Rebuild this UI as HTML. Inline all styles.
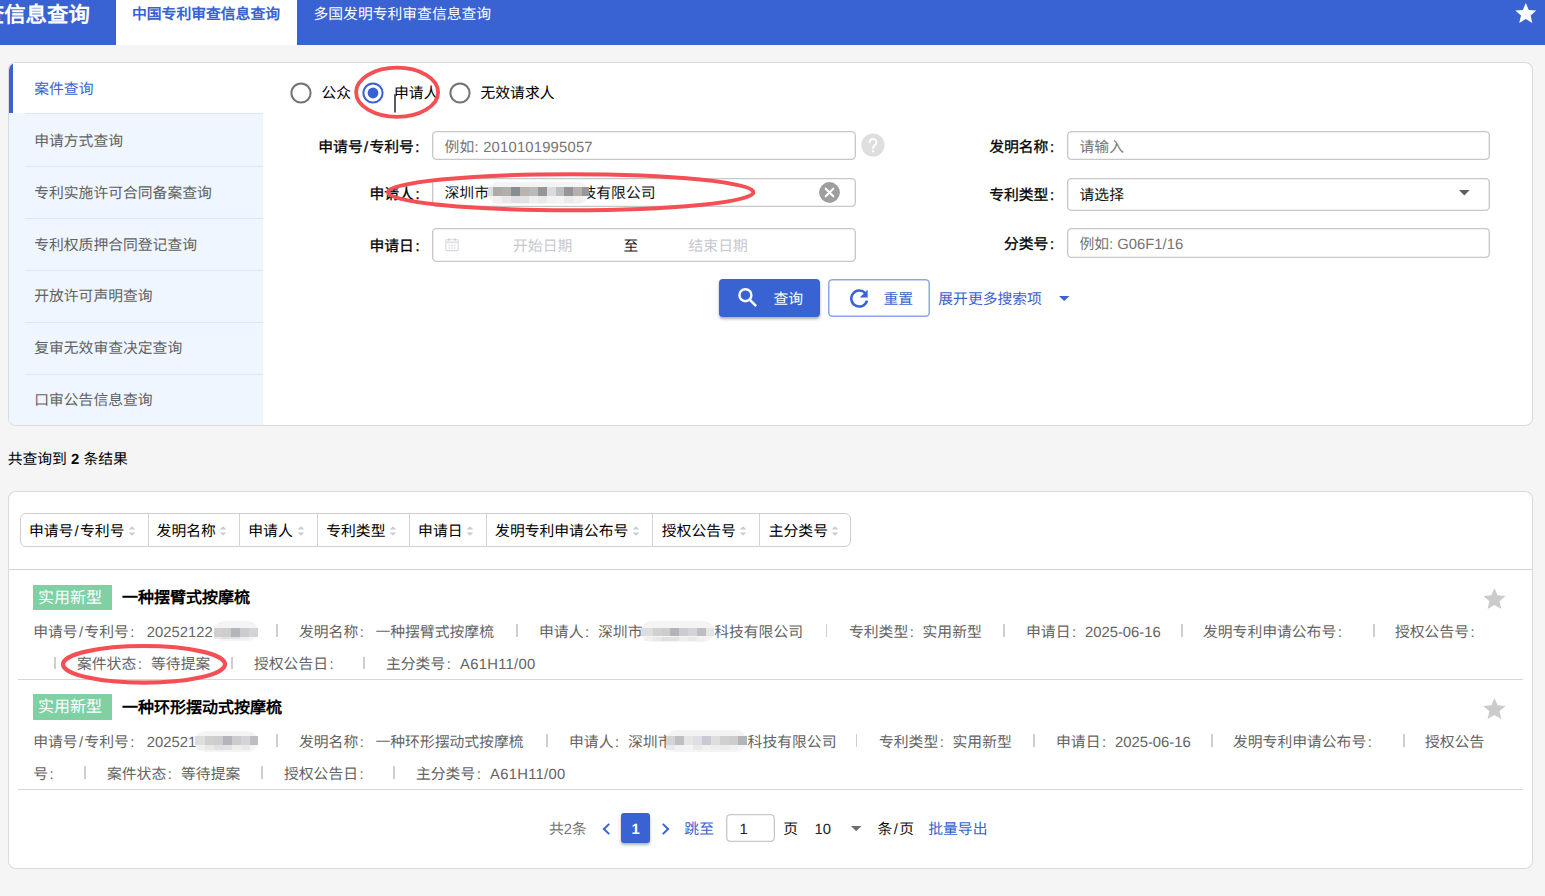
<!DOCTYPE html>
<html lang="zh-CN"><head><meta charset="utf-8"><title>中国专利审查信息查询</title><style>
html,body{margin:0;padding:0}
body{width:1545px;height:896px;overflow:hidden;background:#f5f5f5;position:relative;font-family:"Liberation Sans",sans-serif;font-size:14.8px;color:#000;text-rendering:geometricPrecision}
.b{position:absolute;display:block}
.t{position:absolute;white-space:nowrap;text-align:justify;text-align-last:justify;line-height:20px;height:20px}
.t i{font-style:normal;margin-left:1.5px}
.t em{font-style:normal;margin:0 1.3px}
</style></head><body>
<div class="b" style="left:0.00px;top:0.00px;width:1545.00px;height:44.50px;background:#3963d2;"></div>
<div class="b" style="left:116.00px;top:0.00px;width:181.20px;height:44.50px;background:#fff;"></div>
<span class="t " style="width:107.02px;top:0.50px;left:-17.20px;font-size:21.4px;color:#fff;font-weight:bold;line-height:28px;height:28px;">查信息查询</span>
<span class="t " style="width:148.03px;top:4.70px;left:132.00px;color:#3963d2;font-weight:bold;">中国专利审查信息查询</span>
<span class="t " style="width:177.63px;top:4.70px;left:313.50px;color:#fff;font-weight:500;">多国发明专利审查信息查询</span>
<svg class="b" style="left:1514px;top:2px" width="24" height="23" viewBox="0 0 24 23"><path fill="#fff" d="M11.8 0.9l2.95 7.0 7.6 0.65-5.75 5.0 1.72 7.4-6.52-3.93-6.52 3.93 1.72-7.4-5.75-5.0 7.6-0.65z"/></svg>
<div class="b" style="left:8.50px;top:62.50px;width:1523.80px;height:362.60px;background:#fff;border-radius:7px;box-shadow:0 0 0 1px #dadada;overflow:hidden;"></div>
<div class="b" style="left:8.5px;top:62.5px;width:254.60px;height:362.60px;border-radius:7px 0 0 7px;overflow:hidden;background:#eff6ff;">
<div class="b" style="left:0;top:0;width:254.60px;height:50.90px;background:#fff;border-left:4.2px solid #3963d2;box-sizing:border-box"></div>
<div class="b" style="left:16.5px;top:50.90px;width:238.10px;height:1px;background:#d9e7fb"></div>
<div class="b" style="left:16.5px;top:103.80px;width:238.10px;height:1px;background:#d9e7fb"></div>
<div class="b" style="left:16.5px;top:155.60px;width:238.10px;height:1px;background:#d9e7fb"></div>
<div class="b" style="left:16.5px;top:207.40px;width:238.10px;height:1px;background:#d9e7fb"></div>
<div class="b" style="left:16.5px;top:259.20px;width:238.10px;height:1px;background:#d9e7fb"></div>
<div class="b" style="left:16.5px;top:311.00px;width:238.10px;height:1px;background:#d9e7fb"></div>
</div>
<span class="t " style="width:59.25px;top:80.10px;left:34.20px;color:#3963d2;">案件查询</span>
<span class="t " style="width:88.85px;top:131.90px;left:34.20px;color:#616161;">申请方式查询</span>
<span class="t " style="width:177.63px;top:183.70px;left:34.20px;color:#616161;">专利实施许可合同备案查询</span>
<span class="t " style="width:162.83px;top:235.50px;left:34.20px;color:#616161;">专利权质押合同登记查询</span>
<span class="t " style="width:118.44px;top:287.30px;left:34.20px;color:#616161;">开放许可声明查询</span>
<span class="t " style="width:148.03px;top:339.10px;left:34.20px;color:#616161;">复审无效审查决定查询</span>
<span class="t " style="width:118.44px;top:390.90px;left:34.20px;color:#616161;">口审公告信息查询</span>
<svg class="b" style="left:289px;top:80.7px" width="24" height="24" viewBox="0 0 24 24"><circle cx="12" cy="12" r="9.6" fill="none" stroke="#737373" stroke-width="2"/></svg>
<span class="t " style="width:29.66px;top:84.10px;left:321.50px;">公众</span>
<svg class="b" style="left:361px;top:80.7px" width="24" height="24" viewBox="0 0 24 24"><circle cx="12" cy="12" r="9.6" fill="none" stroke="#3963d2" stroke-width="2"/><circle cx="12" cy="12" r="5.4" fill="#3963d2"/></svg>
<span class="t " style="width:44.46px;top:84.10px;left:394.00px;">申请人</span>
<svg class="b" style="left:448px;top:80.7px" width="24" height="24" viewBox="0 0 24 24"><circle cx="12" cy="12" r="9.6" fill="none" stroke="#737373" stroke-width="2"/></svg>
<span class="t " style="width:74.05px;top:84.10px;left:480.50px;">无效请求人</span>
<div class="b" style="left:432.00px;top:131.00px;width:423.60px;height:28.70px;background:#fff;box-shadow:inset 0 0 0 1.35px #c8c8c8;border-radius:4.5px;"></div>
<div class="b" style="left:432.00px;top:177.80px;width:423.60px;height:29.00px;background:#fff;box-shadow:inset 0 0 0 1.35px #c8c8c8;border-radius:4.5px;"></div>
<div class="b" style="left:432.00px;top:228.20px;width:423.60px;height:33.90px;background:#fff;box-shadow:inset 0 0 0 1.35px #c8c8c8;border-radius:4.5px;"></div>
<div class="b" style="left:1067.00px;top:131.00px;width:422.80px;height:28.70px;background:#fff;box-shadow:inset 0 0 0 1.35px #c8c8c8;border-radius:4.5px;"></div>
<div class="b" style="left:1067.00px;top:177.80px;width:422.80px;height:33.70px;background:#fff;box-shadow:inset 0 0 0 1.35px #c8c8c8;border-radius:4.5px;"></div>
<div class="b" style="left:1067.00px;top:228.20px;width:422.80px;height:29.40px;background:#fff;box-shadow:inset 0 0 0 1.35px #c8c8c8;border-radius:4.5px;"></div>
<span class="t " style="width:101.21px;top:137.60px;right:1125.50px;font-weight:500;-webkit-text-stroke:.3px #000;">申请号<em>/</em>专利号<i>:</i></span>
<span class="t " style="width:50.08px;top:184.70px;right:1125.50px;font-weight:500;-webkit-text-stroke:.3px #000;">申请人<i>:</i></span>
<span class="t " style="width:50.08px;top:236.80px;right:1125.50px;font-weight:500;-webkit-text-stroke:.3px #000;">申请日<i>:</i></span>
<span class="t " style="width:64.88px;top:137.60px;right:491.00px;font-weight:500;-webkit-text-stroke:.3px #000;">发明名称<i>:</i></span>
<span class="t " style="width:64.88px;top:185.90px;right:491.00px;font-weight:500;-webkit-text-stroke:.3px #000;">专利类型<i>:</i></span>
<span class="t " style="width:50.08px;top:234.90px;right:491.00px;font-weight:500;-webkit-text-stroke:.3px #000;">分类号<i>:</i></span>
<span class="t " style="width:148.25px;top:137.50px;left:444.50px;color:#757575;letter-spacing:.2px;">例如: 2010101995057</span>
<span class="t " style="width:44.46px;top:183.90px;left:444.50px;color:#111;">深圳市</span>
<span class="t " style="width:74.05px;top:183.90px;left:581.50px;color:#111;">技有限公司</span>
<span class="t " style="width:59.25px;top:236.60px;left:513.00px;color:#c6c9cf;">开始日期</span>
<span class="t " style="width:14.86px;top:236.60px;left:623.50px;color:#222;">至</span>
<span class="t " style="width:59.25px;top:236.60px;left:688.50px;color:#c6c9cf;">结束日期</span>
<span class="t " style="width:44.46px;top:137.50px;left:1079.50px;color:#757575;">请输入</span>
<span class="t " style="width:44.46px;top:186.30px;left:1079.50px;color:#111;">请选择</span>
<span class="t " style="width:103.67px;top:234.70px;left:1079.50px;color:#757575;">例如: G06F1/16</span>
<svg class="b" style="left:861px;top:133.3px" width="24" height="24" viewBox="0 0 24 24"><circle cx="12" cy="12" r="11.6" fill="#dedede"/><path d="M8.6 9.3a3.4 3.4 0 1 1 5.3 2.8c-1.2 0.85-1.9 1.5-1.9 3" fill="none" stroke="#fff" stroke-width="1.9" stroke-linecap="round"/><circle cx="12" cy="18.3" r="1.2" fill="#fff"/></svg>
<svg class="b" style="left:819px;top:181.7px" width="21" height="21" viewBox="0 0 21 21"><circle cx="10.5" cy="10.5" r="10.4" fill="#9e9e9e"/><path d="M6.7 6.7l7.6 7.6M14.3 6.7l-7.6 7.6" stroke="#fff" stroke-width="2.1" stroke-linecap="round"/></svg>
<svg class="b" style="left:444.5px;top:237.9px" width="14" height="14" viewBox="0 0 14 14"><rect x="0.9" y="1.7" width="12.3" height="10.9" rx="0.8" fill="none" stroke="#d3d6dd" stroke-width="1.1"/><path d="M3.9 0.3v2.2M10.1 0.3v2.2" stroke="#c3c6d2" stroke-width="1.2"/><rect x="1.4" y="3.5" width="11.3" height="1.7" fill="#dddfe4"/><path d="M3.6 7.3h1.5M6.3 7.3h1.5M9 7.3h1.5M3.6 10h1.5M6.3 10h1.5M9 10h1.5" stroke="#c6c9d6" stroke-width="1.1"/></svg>
<svg class="b" style="left:1459px;top:190px" width="11" height="6" viewBox="0 0 11 6"><path d="M0 0h10.6l-5.3 5.4z" fill="#5f5f5f"/></svg>
<div class="b" style="left:718.60px;top:278.50px;width:101.80px;height:38.50px;background:#3963d2;border-radius:4px;box-shadow:0 2px 3px rgba(0,0,0,.32);"></div>
<svg class="b" style="left:737.3px;top:287.2px" width="22" height="22" viewBox="0 0 22 22"><circle cx="8.4" cy="8.2" r="6" fill="none" stroke="#fff" stroke-width="2.4"/><path d="M12.9 12.8l6.2 6.3" stroke="#fff" stroke-width="2.6" stroke-linecap="butt"/></svg>
<span class="t " style="width:29.66px;top:289.50px;left:773.50px;color:#fff;">查询</span>
<div class="b" style="left:828.20px;top:278.50px;width:102.00px;height:38.50px;background:#fff;box-shadow:inset 0 0 0 1.5px #8ea6ea;border-radius:4.5px;"></div>
<svg class="b" style="left:848px;top:287.5px" width="22" height="22" viewBox="0 0 22 22"><path d="M17.2 5.1A8 8 0 1 0 19 12.6" fill="none" stroke="#3963d2" stroke-width="2.5"/><path d="M19.6 1.8v7.8h-7.8z" fill="#3963d2"/></svg>
<span class="t " style="width:29.66px;top:289.50px;left:883.50px;color:#3963d2;">重置</span>
<span class="t " style="width:103.64px;top:289.50px;left:938.30px;color:#3963d2;">展开更多搜索项</span>
<svg class="b" style="left:1058.5px;top:296px" width="11" height="6" viewBox="0 0 11 6"><path d="M0 0h10.4l-5.2 5z" fill="#3963d2"/></svg>
<span class="t " style="width:120.11px;top:450.10px;left:7.70px;">共查询到 <b>2</b> 条结果</span>
<div class="b" style="left:8.50px;top:491.60px;width:1523.80px;height:376.70px;background:#fff;border-radius:7px;box-shadow:0 0 0 1px #dadada;"></div>
<div class="b" style="left:20.00px;top:512.80px;width:831.20px;height:34.40px;background:#fff;border:1px solid #cecece;border-radius:6px;box-sizing:border-box;"></div>
<span class="t " style="width:95.58px;top:521.60px;left:28.90px;">申请号<em>/</em>专利号</span>
<svg class="b" style="left:127.8px;top:525.2px" width="8" height="12" viewBox="0 0 8 12"><path d="M0.6 4.6L4 1.2l3.4 3.4zM0.6 7.4L4 10.8l3.4-3.4z" fill="#c9ccd2"/></svg>
<div class="b" style="left:148.00px;top:513.30px;width:1.00px;height:33.40px;background:#d4d4d4;"></div>
<span class="t " style="width:59.25px;top:521.60px;left:156.60px;">发明名称</span>
<svg class="b" style="left:218.7px;top:525.2px" width="8" height="12" viewBox="0 0 8 12"><path d="M0.6 4.6L4 1.2l3.4 3.4zM0.6 7.4L4 10.8l3.4-3.4z" fill="#c9ccd2"/></svg>
<div class="b" style="left:238.90px;top:513.30px;width:1.00px;height:33.40px;background:#d4d4d4;"></div>
<span class="t " style="width:44.46px;top:521.60px;left:248.30px;">申请人</span>
<svg class="b" style="left:296.6px;top:525.2px" width="8" height="12" viewBox="0 0 8 12"><path d="M0.6 4.6L4 1.2l3.4 3.4zM0.6 7.4L4 10.8l3.4-3.4z" fill="#c9ccd2"/></svg>
<div class="b" style="left:316.80px;top:513.30px;width:1.00px;height:33.40px;background:#d4d4d4;"></div>
<span class="t " style="width:59.25px;top:521.60px;left:326.20px;">专利类型</span>
<svg class="b" style="left:388.5px;top:525.2px" width="8" height="12" viewBox="0 0 8 12"><path d="M0.6 4.6L4 1.2l3.4 3.4zM0.6 7.4L4 10.8l3.4-3.4z" fill="#c9ccd2"/></svg>
<div class="b" style="left:408.70px;top:513.30px;width:1.00px;height:33.40px;background:#d4d4d4;"></div>
<span class="t " style="width:44.46px;top:521.60px;left:418.10px;">申请日</span>
<svg class="b" style="left:465.5px;top:525.2px" width="8" height="12" viewBox="0 0 8 12"><path d="M0.6 4.6L4 1.2l3.4 3.4zM0.6 7.4L4 10.8l3.4-3.4z" fill="#c9ccd2"/></svg>
<div class="b" style="left:485.70px;top:513.30px;width:1.00px;height:33.40px;background:#d4d4d4;"></div>
<span class="t " style="width:133.24px;top:521.60px;left:495.10px;">发明专利申请公布号</span>
<svg class="b" style="left:632.2px;top:525.2px" width="8" height="12" viewBox="0 0 8 12"><path d="M0.6 4.6L4 1.2l3.4 3.4zM0.6 7.4L4 10.8l3.4-3.4z" fill="#c9ccd2"/></svg>
<div class="b" style="left:652.40px;top:513.30px;width:1.00px;height:33.40px;background:#d4d4d4;"></div>
<span class="t " style="width:74.05px;top:521.60px;left:661.80px;">授权公告号</span>
<svg class="b" style="left:739.1px;top:525.2px" width="8" height="12" viewBox="0 0 8 12"><path d="M0.6 4.6L4 1.2l3.4 3.4zM0.6 7.4L4 10.8l3.4-3.4z" fill="#c9ccd2"/></svg>
<div class="b" style="left:759.30px;top:513.30px;width:1.00px;height:33.40px;background:#d4d4d4;"></div>
<span class="t " style="width:59.25px;top:521.60px;left:768.70px;">主分类号</span>
<svg class="b" style="left:830.5px;top:525.2px" width="8" height="12" viewBox="0 0 8 12"><path d="M0.6 4.6L4 1.2l3.4 3.4zM0.6 7.4L4 10.8l3.4-3.4z" fill="#c9ccd2"/></svg>
<div class="b" style="left:8.50px;top:569.00px;width:1523.80px;height:1.00px;background:#d2d2d2;"></div>
<div class="b" style="left:33.20px;top:584.60px;width:78.80px;height:25.20px;background:#80d0a4;"></div>
<span class="t " style="width:64.07px;top:588.60px;left:38.00px;font-size:16px;color:#fff;">实用新型</span>
<span class="t " style="width:128.07px;top:588.10px;left:122.00px;font-size:16px;font-weight:bold;line-height:22px;height:22px;font-family:'Liberation Sans',serif;">一种摆臂式按摩梳</span>
<span class="t " style="width:101.21px;top:622.90px;left:33.20px;color:#646464;">申请号<em>/</em>专利号<i>:</i></span>
<span class="t " style="width:65.89px;top:622.90px;left:146.80px;color:#646464;">20252122</span>
<div class="b" style="left:276.40px;top:624.40px;width:1.30px;height:12.80px;background:#cecece;"></div>
<span class="t " style="width:64.88px;top:622.90px;left:299.00px;color:#646464;">发明名称<i>:</i></span>
<span class="t " style="width:118.44px;top:622.90px;left:375.50px;color:#646464;">一种摆臂式按摩梳</span>
<div class="b" style="left:516.40px;top:624.40px;width:1.30px;height:12.80px;background:#cecece;"></div>
<span class="t " style="width:50.08px;top:622.90px;left:539.00px;color:#646464;">申请人<i>:</i></span>
<span class="t " style="width:44.46px;top:622.90px;left:598.00px;color:#646464;">深圳市</span>
<span class="t " style="width:88.85px;top:622.90px;left:714.20px;color:#646464;">科技有限公司</span>
<div class="b" style="left:826.20px;top:624.40px;width:1.30px;height:12.80px;background:#cecece;"></div>
<span class="t " style="width:64.88px;top:622.90px;left:849.00px;color:#646464;">专利类型<i>:</i></span>
<span class="t " style="width:59.25px;top:622.90px;left:922.50px;color:#646464;">实用新型</span>
<div class="b" style="left:1003.40px;top:624.40px;width:1.30px;height:12.80px;background:#cecece;"></div>
<span class="t " style="width:50.08px;top:622.90px;left:1026.00px;color:#646464;">申请日<i>:</i></span>
<span class="t " style="width:75.75px;top:622.90px;left:1085.00px;color:#646464;">2025-06-16</span>
<div class="b" style="left:1181.40px;top:624.40px;width:1.30px;height:12.80px;background:#cecece;"></div>
<span class="t " style="width:138.86px;top:622.90px;left:1203.00px;color:#646464;">发明专利申请公布号<i>:</i></span>
<div class="b" style="left:1373.40px;top:624.40px;width:1.30px;height:12.80px;background:#cecece;"></div>
<span class="t " style="width:79.67px;top:622.90px;left:1395.00px;color:#646464;">授权公告号<i>:</i></span>
<div class="b" style="left:54.40px;top:656.60px;width:1.30px;height:12.80px;background:#cecece;"></div>
<span class="t " style="width:64.88px;top:655.10px;left:77.00px;color:#646464;">案件状态<i>:</i></span>
<span class="t " style="width:59.25px;top:655.10px;left:151.00px;color:#646464;">等待提案</span>
<div class="b" style="left:231.40px;top:656.60px;width:1.30px;height:12.80px;background:#cecece;"></div>
<span class="t " style="width:79.67px;top:655.10px;left:254.00px;color:#646464;">授权公告日<i>:</i></span>
<div class="b" style="left:363.40px;top:656.60px;width:1.30px;height:12.80px;background:#cecece;"></div>
<span class="t " style="width:64.88px;top:655.10px;left:386.00px;color:#646464;">主分类号<i>:</i></span>
<span class="t " style="width:75.52px;top:655.10px;left:460.00px;color:#646464;letter-spacing:.28px;">A61H11/00</span>
<svg class="b" style="left:1482.2px;top:586.9px" width="25.3" height="24.25" viewBox="0 0 24 23"><path fill="#cbcbcb" d="M11.8 0.9l2.95 7.0 7.6 0.65-5.75 5.0 1.72 7.4-6.52-3.93-6.52 3.93 1.72-7.4-5.75-5.0 7.6-0.65z"/></svg>
<div class="b" style="left:17.60px;top:679.20px;width:1505.40px;height:1.00px;background:#d6d6d6;"></div>
<div class="b" style="left:33.20px;top:694.40px;width:78.80px;height:25.20px;background:#80d0a4;"></div>
<span class="t " style="width:64.07px;top:698.40px;left:38.00px;font-size:16px;color:#fff;">实用新型</span>
<span class="t " style="width:160.07px;top:697.90px;left:122.00px;font-size:16px;font-weight:bold;line-height:22px;height:22px;font-family:'Liberation Sans',serif;">一种环形摆动式按摩梳</span>
<span class="t " style="width:101.21px;top:732.70px;left:33.20px;color:#646464;">申请号<em>/</em>专利号<i>:</i></span>
<span class="t " style="width:49.44px;top:732.70px;left:146.80px;color:#646464;">202521</span>
<div class="b" style="left:276.40px;top:734.20px;width:1.30px;height:12.80px;background:#cecece;"></div>
<span class="t " style="width:64.88px;top:732.70px;left:299.00px;color:#646464;">发明名称<i>:</i></span>
<span class="t " style="width:148.03px;top:732.70px;left:375.50px;color:#646464;">一种环形摆动式按摩梳</span>
<div class="b" style="left:546.40px;top:734.20px;width:1.30px;height:12.80px;background:#cecece;"></div>
<span class="t " style="width:50.08px;top:732.70px;left:569.00px;color:#646464;">申请人<i>:</i></span>
<span class="t " style="width:44.46px;top:732.70px;left:628.00px;color:#646464;">深圳市</span>
<span class="t " style="width:88.85px;top:732.70px;left:747.60px;color:#646464;">科技有限公司</span>
<div class="b" style="left:856.20px;top:734.20px;width:1.30px;height:12.80px;background:#cecece;"></div>
<span class="t " style="width:64.88px;top:732.70px;left:879.00px;color:#646464;">专利类型<i>:</i></span>
<span class="t " style="width:59.25px;top:732.70px;left:952.50px;color:#646464;">实用新型</span>
<div class="b" style="left:1033.40px;top:734.20px;width:1.30px;height:12.80px;background:#cecece;"></div>
<span class="t " style="width:50.08px;top:732.70px;left:1056.00px;color:#646464;">申请日<i>:</i></span>
<span class="t " style="width:75.75px;top:732.70px;left:1115.00px;color:#646464;">2025-06-16</span>
<div class="b" style="left:1211.40px;top:734.20px;width:1.30px;height:12.80px;background:#cecece;"></div>
<span class="t " style="width:138.86px;top:732.70px;left:1233.00px;color:#646464;">发明专利申请公布号<i>:</i></span>
<div class="b" style="left:1403.40px;top:734.20px;width:1.30px;height:12.80px;background:#cecece;"></div>
<span class="t " style="width:59.25px;top:732.70px;left:1425.00px;color:#646464;">授权公告</span>
<span class="t " style="width:20.49px;top:764.90px;left:33.20px;color:#646464;">号<i>:</i></span>
<div class="b" style="left:84.40px;top:766.40px;width:1.30px;height:12.80px;background:#cecece;"></div>
<span class="t " style="width:64.88px;top:764.90px;left:107.00px;color:#646464;">案件状态<i>:</i></span>
<span class="t " style="width:59.25px;top:764.90px;left:181.00px;color:#646464;">等待提案</span>
<div class="b" style="left:261.40px;top:766.40px;width:1.30px;height:12.80px;background:#cecece;"></div>
<span class="t " style="width:79.67px;top:764.90px;left:284.00px;color:#646464;">授权公告日<i>:</i></span>
<div class="b" style="left:393.40px;top:766.40px;width:1.30px;height:12.80px;background:#cecece;"></div>
<span class="t " style="width:64.88px;top:764.90px;left:416.00px;color:#646464;">主分类号<i>:</i></span>
<span class="t " style="width:75.52px;top:764.90px;left:490.00px;color:#646464;letter-spacing:.28px;">A61H11/00</span>
<svg class="b" style="left:1482.2px;top:696.7px" width="25.3" height="24.25" viewBox="0 0 24 23"><path fill="#cbcbcb" d="M11.8 0.9l2.95 7.0 7.6 0.65-5.75 5.0 1.72 7.4-6.52-3.93-6.52 3.93 1.72-7.4-5.75-5.0 7.6-0.65z"/></svg>
<div class="b" style="left:17.60px;top:789.00px;width:1505.40px;height:1.00px;background:#d6d6d6;"></div>
<span class="t " style="width:37.88px;top:820.10px;left:549.00px;color:#757575;">共2条</span>
<svg class="b" style="left:600.5px;top:821.5px" width="11" height="14" viewBox="0 0 11 14"><path d="M8.2 1.9L2.9 7l5.3 5.1" fill="none" stroke="#3963d2" stroke-width="2"/></svg>
<div class="b" style="left:620.70px;top:812.80px;width:29.80px;height:30.60px;background:#3963d2;border-radius:3px;box-shadow:0 2px 3px rgba(0,0,0,.3);"></div>
<span class="t " style="width:8.28px;top:819.90px;left:631.50px;color:#fff;font-weight:bold;">1</span>
<svg class="b" style="left:659.5px;top:821.5px" width="11" height="14" viewBox="0 0 11 14"><path d="M2.8 1.9L8.1 7l-5.3 5.1" fill="none" stroke="#3963d2" stroke-width="2"/></svg>
<span class="t " style="width:29.66px;top:820.10px;left:684.30px;color:#3963d2;">跳至</span>
<div class="b" style="left:726.30px;top:813.80px;width:48.70px;height:28.60px;background:#fff;box-shadow:inset 0 0 0 1.35px #c8c8c8;border-radius:4.5px;"></div>
<span class="t " style="width:8.28px;top:819.90px;left:739.50px;color:#222;">1</span>
<span class="t " style="width:14.86px;top:819.90px;left:783.30px;color:#111;">页</span>
<span class="t " style="width:16.52px;top:819.70px;left:814.50px;color:#222;">10</span>
<svg class="b" style="left:851.3px;top:825.7px" width="11" height="6" viewBox="0 0 11 6"><path d="M0 0h10.4l-5.2 5.2z" fill="#6e6e6e"/></svg>
<span class="t " style="width:36.39px;top:819.90px;left:877.60px;color:#111;">条<em>/</em>页</span>
<span class="t " style="width:59.25px;top:820.10px;left:928.20px;color:#3963d2;">批量导出</span>
<div class="b" style="left:487.5px;top:182.2px;width:101.3px;height:22.3px;background:#f4f4f4;border-radius:11.1px/11.1px"></div><div class="b" style="left:487.5px;top:186.8px;width:5.8px;height:9.1px;background:#dcdede"></div><div class="b" style="left:493.0px;top:186.8px;width:9.2px;height:9.1px;background:rgb(172,170,168)"></div><div class="b" style="left:493.0px;top:195.9px;width:9.2px;height:7.1px;background:rgb(240,240,240)"></div><div class="b" style="left:501.9px;top:186.8px;width:9.2px;height:9.1px;background:rgb(178,174,170)"></div><div class="b" style="left:501.9px;top:195.9px;width:9.2px;height:7.1px;background:rgb(232,232,231)"></div><div class="b" style="left:510.9px;top:186.8px;width:9.2px;height:9.1px;background:rgb(138,140,148)"></div><div class="b" style="left:510.9px;top:195.9px;width:9.2px;height:7.1px;background:rgb(222,224,228)"></div><div class="b" style="left:519.8px;top:186.8px;width:9.2px;height:9.1px;background:rgb(186,180,175)"></div><div class="b" style="left:519.8px;top:195.9px;width:9.2px;height:7.1px;background:rgb(226,226,226)"></div><div class="b" style="left:528.7px;top:186.8px;width:9.2px;height:9.1px;background:rgb(186,186,186)"></div><div class="b" style="left:528.7px;top:195.9px;width:9.2px;height:7.1px;background:rgb(238,238,238)"></div><div class="b" style="left:537.6px;top:186.8px;width:9.2px;height:9.1px;background:rgb(152,150,148)"></div><div class="b" style="left:537.6px;top:195.9px;width:9.2px;height:7.1px;background:rgb(234,233,232)"></div><div class="b" style="left:546.6px;top:186.8px;width:9.2px;height:9.1px;background:rgb(216,220,224)"></div><div class="b" style="left:546.6px;top:195.9px;width:9.2px;height:7.1px;background:rgb(242,242,242)"></div><div class="b" style="left:555.5px;top:186.8px;width:9.2px;height:9.1px;background:rgb(190,190,192)"></div><div class="b" style="left:555.5px;top:195.9px;width:9.2px;height:7.1px;background:rgb(244,244,244)"></div><div class="b" style="left:564.4px;top:186.8px;width:9.2px;height:9.1px;background:rgb(150,148,150)"></div><div class="b" style="left:564.4px;top:195.9px;width:9.2px;height:7.1px;background:rgb(236,234,233)"></div><div class="b" style="left:573.4px;top:186.8px;width:9.2px;height:9.1px;background:rgb(180,176,172)"></div><div class="b" style="left:573.4px;top:195.9px;width:9.2px;height:7.1px;background:rgb(240,240,241)"></div><div class="b" style="left:582.3px;top:186.8px;width:6.8px;height:9.1px;background:rgb(150,152,158)"></div>
<div class="b" style="left:213.5px;top:620.5px;width:44.7px;height:20.5px;background:#f4f4f4;border-radius:10.2px/10.2px"></div><div class="b" style="left:213.5px;top:628.0px;width:0.3px;height:8.8px;background:#dcdede"></div><div class="b" style="left:213.5px;top:628.0px;width:9.2px;height:8.8px;background:rgb(208,208,208)"></div><div class="b" style="left:213.5px;top:636.8px;width:9.2px;height:2.7px;background:rgb(232,232,231)"></div><div class="b" style="left:222.4px;top:628.0px;width:9.2px;height:8.8px;background:rgb(206,205,206)"></div><div class="b" style="left:222.4px;top:636.8px;width:9.2px;height:2.7px;background:rgb(222,224,228)"></div><div class="b" style="left:231.4px;top:628.0px;width:9.2px;height:8.8px;background:rgb(178,182,188)"></div><div class="b" style="left:231.4px;top:636.8px;width:9.2px;height:2.7px;background:rgb(226,226,226)"></div><div class="b" style="left:240.3px;top:628.0px;width:9.2px;height:8.8px;background:rgb(204,204,206)"></div><div class="b" style="left:240.3px;top:636.8px;width:9.2px;height:2.7px;background:rgb(238,238,238)"></div><div class="b" style="left:249.2px;top:628.0px;width:9.2px;height:8.8px;background:rgb(212,212,216)"></div>
<div class="b" style="left:640.6px;top:620.5px;width:73.2px;height:21.5px;background:#f4f4f4;border-radius:10.8px/10.8px"></div><div class="b" style="left:640.6px;top:627.6px;width:3.3px;height:8.9px;background:#dcdede"></div><div class="b" style="left:643.6px;top:627.6px;width:9.2px;height:8.9px;background:rgb(222,222,222)"></div><div class="b" style="left:643.6px;top:636.5px;width:9.2px;height:4.0px;background:rgb(240,240,240)"></div><div class="b" style="left:652.5px;top:627.6px;width:9.2px;height:8.9px;background:rgb(208,208,208)"></div><div class="b" style="left:652.5px;top:636.5px;width:9.2px;height:4.0px;background:rgb(232,232,231)"></div><div class="b" style="left:661.5px;top:627.6px;width:9.2px;height:8.9px;background:rgb(206,205,206)"></div><div class="b" style="left:661.5px;top:636.5px;width:9.2px;height:4.0px;background:rgb(222,224,228)"></div><div class="b" style="left:670.4px;top:627.6px;width:9.2px;height:8.9px;background:rgb(178,182,188)"></div><div class="b" style="left:670.4px;top:636.5px;width:9.2px;height:4.0px;background:rgb(226,226,226)"></div><div class="b" style="left:679.3px;top:627.6px;width:9.2px;height:8.9px;background:rgb(204,204,206)"></div><div class="b" style="left:679.3px;top:636.5px;width:9.2px;height:4.0px;background:rgb(238,238,238)"></div><div class="b" style="left:688.2px;top:627.6px;width:9.2px;height:8.9px;background:rgb(212,212,216)"></div><div class="b" style="left:688.2px;top:636.5px;width:9.2px;height:4.0px;background:rgb(234,233,232)"></div><div class="b" style="left:697.2px;top:627.6px;width:9.2px;height:8.9px;background:rgb(190,190,192)"></div><div class="b" style="left:697.2px;top:636.5px;width:9.2px;height:4.0px;background:rgb(242,242,242)"></div><div class="b" style="left:706.1px;top:627.6px;width:8.0px;height:8.9px;background:rgb(230,229,228)"></div>
<div class="b" style="left:194.5px;top:731.0px;width:63.7px;height:21.0px;background:#f4f4f4;border-radius:10.5px/10.5px"></div><div class="b" style="left:194.5px;top:735.8px;width:2.3px;height:9.6px;background:#dcdede"></div><div class="b" style="left:196.5px;top:735.8px;width:9.2px;height:9.6px;background:rgb(222,222,222)"></div><div class="b" style="left:196.5px;top:745.4px;width:9.2px;height:5.1px;background:rgb(240,240,240)"></div><div class="b" style="left:205.4px;top:735.8px;width:9.2px;height:9.6px;background:rgb(208,208,208)"></div><div class="b" style="left:205.4px;top:745.4px;width:9.2px;height:5.1px;background:rgb(232,232,231)"></div><div class="b" style="left:214.4px;top:735.8px;width:9.2px;height:9.6px;background:rgb(206,205,206)"></div><div class="b" style="left:214.4px;top:745.4px;width:9.2px;height:5.1px;background:rgb(222,224,228)"></div><div class="b" style="left:223.3px;top:735.8px;width:9.2px;height:9.6px;background:rgb(178,182,188)"></div><div class="b" style="left:223.3px;top:745.4px;width:9.2px;height:5.1px;background:rgb(226,226,226)"></div><div class="b" style="left:232.2px;top:735.8px;width:9.2px;height:9.6px;background:rgb(204,204,206)"></div><div class="b" style="left:232.2px;top:745.4px;width:9.2px;height:5.1px;background:rgb(238,238,238)"></div><div class="b" style="left:241.2px;top:735.8px;width:9.2px;height:9.6px;background:rgb(212,212,216)"></div><div class="b" style="left:241.2px;top:745.4px;width:9.2px;height:5.1px;background:rgb(234,233,232)"></div><div class="b" style="left:250.1px;top:735.8px;width:8.4px;height:9.6px;background:rgb(190,190,192)"></div>
<div class="b" style="left:666.4px;top:729.5px;width:80.2px;height:22.5px;background:#f4f4f4;border-radius:11.2px/11.2px"></div><div class="b" style="left:666.4px;top:736.3px;width:0.3px;height:9.1px;background:#dcdede"></div><div class="b" style="left:666.4px;top:736.3px;width:9.2px;height:9.1px;background:rgb(212,212,216)"></div><div class="b" style="left:666.4px;top:745.4px;width:9.2px;height:5.1px;background:rgb(234,233,232)"></div><div class="b" style="left:675.3px;top:736.3px;width:9.2px;height:9.1px;background:rgb(190,190,192)"></div><div class="b" style="left:675.3px;top:745.4px;width:9.2px;height:5.1px;background:rgb(242,242,242)"></div><div class="b" style="left:684.3px;top:736.3px;width:9.2px;height:9.1px;background:rgb(230,229,228)"></div><div class="b" style="left:684.3px;top:745.4px;width:9.2px;height:5.1px;background:rgb(244,244,244)"></div><div class="b" style="left:693.2px;top:736.3px;width:9.2px;height:9.1px;background:rgb(220,224,230)"></div><div class="b" style="left:693.2px;top:745.4px;width:9.2px;height:5.1px;background:rgb(236,234,233)"></div><div class="b" style="left:702.1px;top:736.3px;width:9.2px;height:9.1px;background:rgb(200,202,208)"></div><div class="b" style="left:702.1px;top:745.4px;width:9.2px;height:5.1px;background:rgb(240,240,241)"></div><div class="b" style="left:711.0px;top:736.3px;width:9.2px;height:9.1px;background:rgb(222,222,222)"></div><div class="b" style="left:711.0px;top:745.4px;width:9.2px;height:5.1px;background:rgb(238,238,238)"></div><div class="b" style="left:720.0px;top:736.3px;width:9.2px;height:9.1px;background:rgb(208,208,208)"></div><div class="b" style="left:720.0px;top:745.4px;width:9.2px;height:5.1px;background:rgb(236,236,236)"></div><div class="b" style="left:728.9px;top:736.3px;width:9.2px;height:9.1px;background:rgb(206,205,206)"></div><div class="b" style="left:728.9px;top:745.4px;width:9.2px;height:5.1px;background:rgb(240,240,240)"></div><div class="b" style="left:737.8px;top:736.3px;width:9.1px;height:9.1px;background:rgb(178,182,188)"></div>
<svg class="b" style="left:0;top:0;pointer-events:none" width="1545" height="896" viewBox="0 0 1545 896"><g fill="none" stroke="#f44f54" stroke-width="3.5"><ellipse cx="397.1" cy="92.3" rx="41" ry="24.6" stroke-width="3.8"/><ellipse cx="570.7" cy="192.3" rx="182.7" ry="18" stroke-width="4"/><ellipse cx="144" cy="664.3" rx="81" ry="18.3" stroke-width="4.2"/></g><path d="M395 94.2V112.6" stroke="#333" stroke-width="1.6" fill="none"/></svg>
</body></html>
